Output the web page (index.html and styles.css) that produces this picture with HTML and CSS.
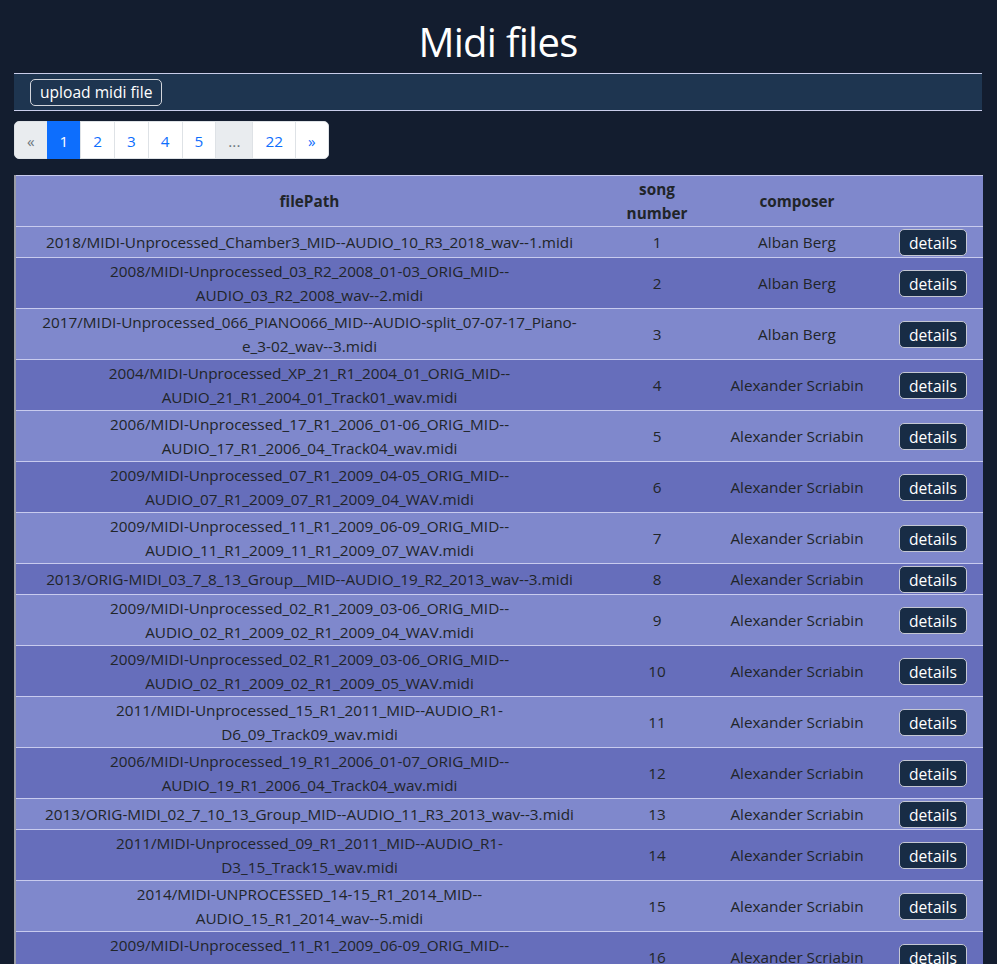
FILE: index.html
```html
<!DOCTYPE html>
<html lang="en">
<head>
<meta charset="utf-8">
<title>Midi files</title>
<link rel="stylesheet" href="styles.css">
</head>
<body>
<div class="page">
  <h1 class="title">Midi files</h1>
  <nav class="toolbar">
    <button class="btn-outline" type="button">upload midi file</button>
  </nav>
  <ul class="pagination">
    <li class="page-item disabled"><span>&laquo;</span></li>
    <li class="page-item active"><span>1</span></li>
    <li class="page-item"><span>2</span></li>
    <li class="page-item"><span>3</span></li>
    <li class="page-item"><span>4</span></li>
    <li class="page-item"><span>5</span></li>
    <li class="page-item disabled"><span>...</span></li>
    <li class="page-item"><span>22</span></li>
    <li class="page-item"><span>&raquo;</span></li>
  </ul>
  <table class="files">
    <colgroup>
      <col class="c-path"><col class="c-num"><col class="c-comp"><col class="c-act">
    </colgroup>
    <thead>
      <tr><th>filePath</th><th>song<br>number</th><th>composer</th><th></th></tr>
    </thead>
    <tbody>
      <tr><td class="path">2018/MIDI-Unprocessed_Chamber3_MID--AUDIO_10_R3_2018_wav--1.midi</td><td>1</td><td>Alban Berg</td><td><button class="btn-details" type="button">details</button></td></tr>
      <tr><td class="path">2008/MIDI-Unprocessed_03_R2_2008_01-03_ORIG_MID--<br>AUDIO_03_R2_2008_wav--2.midi</td><td>2</td><td>Alban Berg</td><td><button class="btn-details" type="button">details</button></td></tr>
      <tr><td class="path">2017/MIDI-Unprocessed_066_PIANO066_MID--AUDIO-split_07-07-17_Piano-<br>e_3-02_wav--3.midi</td><td>3</td><td>Alban Berg</td><td><button class="btn-details" type="button">details</button></td></tr>
      <tr><td class="path">2004/MIDI-Unprocessed_XP_21_R1_2004_01_ORIG_MID--<br>AUDIO_21_R1_2004_01_Track01_wav.midi</td><td>4</td><td>Alexander Scriabin</td><td><button class="btn-details" type="button">details</button></td></tr>
      <tr><td class="path">2006/MIDI-Unprocessed_17_R1_2006_01-06_ORIG_MID--<br>AUDIO_17_R1_2006_04_Track04_wav.midi</td><td>5</td><td>Alexander Scriabin</td><td><button class="btn-details" type="button">details</button></td></tr>
      <tr><td class="path">2009/MIDI-Unprocessed_07_R1_2009_04-05_ORIG_MID--<br>AUDIO_07_R1_2009_07_R1_2009_04_WAV.midi</td><td>6</td><td>Alexander Scriabin</td><td><button class="btn-details" type="button">details</button></td></tr>
      <tr><td class="path">2009/MIDI-Unprocessed_11_R1_2009_06-09_ORIG_MID--<br>AUDIO_11_R1_2009_11_R1_2009_07_WAV.midi</td><td>7</td><td>Alexander Scriabin</td><td><button class="btn-details" type="button">details</button></td></tr>
      <tr><td class="path">2013/ORIG-MIDI_03_7_8_13_Group__MID--AUDIO_19_R2_2013_wav--3.midi</td><td>8</td><td>Alexander Scriabin</td><td><button class="btn-details" type="button">details</button></td></tr>
      <tr><td class="path">2009/MIDI-Unprocessed_02_R1_2009_03-06_ORIG_MID--<br>AUDIO_02_R1_2009_02_R1_2009_04_WAV.midi</td><td>9</td><td>Alexander Scriabin</td><td><button class="btn-details" type="button">details</button></td></tr>
      <tr><td class="path">2009/MIDI-Unprocessed_02_R1_2009_03-06_ORIG_MID--<br>AUDIO_02_R1_2009_02_R1_2009_05_WAV.midi</td><td>10</td><td>Alexander Scriabin</td><td><button class="btn-details" type="button">details</button></td></tr>
      <tr><td class="path">2011/MIDI-Unprocessed_15_R1_2011_MID--AUDIO_R1-<br>D6_09_Track09_wav.midi</td><td>11</td><td>Alexander Scriabin</td><td><button class="btn-details" type="button">details</button></td></tr>
      <tr><td class="path">2006/MIDI-Unprocessed_19_R1_2006_01-07_ORIG_MID--<br>AUDIO_19_R1_2006_04_Track04_wav.midi</td><td>12</td><td>Alexander Scriabin</td><td><button class="btn-details" type="button">details</button></td></tr>
      <tr><td class="path">2013/ORIG-MIDI_02_7_10_13_Group_MID--AUDIO_11_R3_2013_wav--3.midi</td><td>13</td><td>Alexander Scriabin</td><td><button class="btn-details" type="button">details</button></td></tr>
      <tr><td class="path">2011/MIDI-Unprocessed_09_R1_2011_MID--AUDIO_R1-<br>D3_15_Track15_wav.midi</td><td>14</td><td>Alexander Scriabin</td><td><button class="btn-details" type="button">details</button></td></tr>
      <tr><td class="path">2014/MIDI-UNPROCESSED_14-15_R1_2014_MID--<br>AUDIO_15_R1_2014_wav--5.midi</td><td>15</td><td>Alexander Scriabin</td><td><button class="btn-details" type="button">details</button></td></tr>
      <tr><td class="path">2009/MIDI-Unprocessed_11_R1_2009_06-09_ORIG_MID--<br>AUDIO_11_R1_2009_11_R1_2009_08_WAV.midi</td><td>16</td><td>Alexander Scriabin</td><td><button class="btn-details" type="button">details</button></td></tr>
    </tbody>
  </table>
</div>
</body>
</html>
```

FILE: styles.css
```css
* { box-sizing: border-box; }

html, body {
  margin: 0;
  padding: 0;
  background: #131d2f;
}

body {
  font-family: "Open Sans", "Noto Sans", "Liberation Sans", sans-serif;
  font-size: 15.3px;
  line-height: 24px;
  color: #212529;
}

.page {
  padding: 0 15px 0 14px;
}

.title {
  margin: 0;
  padding: 17px 0 7px;
  text-align: center;
  font-size: 40px;
  letter-spacing: -0.7px;
  line-height: 49px;
  font-weight: 400;
  color: #ffffff;
}

.toolbar {
  display: flex;
  align-items: center;
  height: 38px;
  padding: 0 16px;
  background: #1e3550;
  border-top: 1px solid #c9cdea;
  border-bottom: 1px solid #c9cdea;
}

.btn-outline {
  font: inherit;
  font-size: 15.6px;
  color: #ffffff;
  background: transparent;
  border: 1px solid #d3d6dc;
  border-radius: 5px;
  height: 27px;
  padding: 0 9px;
  line-height: 24px;
}

.pagination {
  display: flex;
  list-style: none;
  margin: 10px 0 0;
  padding: 0;
}

.page-item span {
  display: block;
  height: 38px;
  padding: 7px 12px;
  line-height: 24px;
  color: #0d6efd;
  background: #ffffff;
  border: 1px solid #dee2e6;
  margin-left: -1px;
}

.page-item:first-child span {
  margin-left: 0;
  border-radius: 5px 0 0 5px;
}

.page-item:last-child span {
  border-radius: 0 5px 5px 0;
}

.page-item.active span {
  background: #0d6efd;
  border-color: #0d6efd;
  color: #ffffff;
}

.page-item.disabled span {
  background: #e9ecef;
  color: #6c757d;
}

.files {
  width: 100%;
  margin-top: 16px;
  border-collapse: collapse;
  table-layout: fixed;
  border-left: 2px solid #9a9ca6;
}

.c-path { width: 588px; }
.c-num { width: 108px; }
.c-comp { width: 172px; }
.c-act { width: 100px; }

.files th,
.files td {
  padding: 1px 8px;
  text-align: center;
  vertical-align: middle;
  border-bottom: 1px solid #c8cbee;
}

.files td.path {
  white-space: nowrap;
}

.files thead tr {
  background: #7f88cc;
  border-top: 1px solid #c8cbee;
}

.files th {
  font-weight: 700;
  color: #212529;
}

.files tbody tr:nth-child(odd) {
  background: #7f88cc;
}

.files tbody tr:nth-child(even) {
  background: #666ebb;
}

.btn-details {
  font: inherit;
  font-size: 15.6px;
  color: #ffffff;
  background: #182c45;
  border: 1px solid #c4c7d3;
  border-radius: 5px;
  height: 27px;
  margin: 1px 0 0;
  padding: 0 9px;
  line-height: 24px;
  vertical-align: middle;
}
```
